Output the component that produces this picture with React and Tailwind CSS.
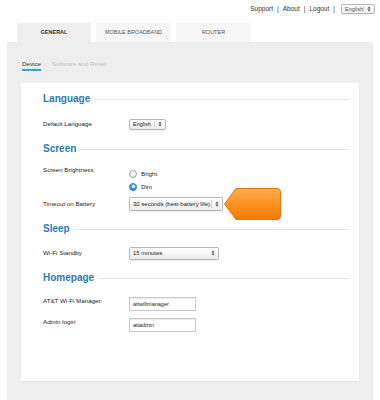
import React from "react";

function Arrows() {
  return (
    <svg width="4" height="6" viewBox="0 0 4 6" className="shrink-0">
      <path d="M0.5 2.4 L2 0.6 L3.5 2.4 Z" fill="#444" />
      <path d="M0.5 3.6 L2 5.4 L3.5 3.6 Z" fill="#444" />
    </svg>
  );
}

function Select({ w, h, text, sep, children, textCls = "text-[6px]" }) {
  return (
    <div
      className={`relative flex items-center justify-between border border-[#b8b8b8] rounded-[2px] bg-gradient-to-b from-white to-[#ebebeb] shadow-[0_1px_1px_rgba(0,0,0,0.08)] pl-[3px] pr-[3px] text-[#222] ${textCls} ${w} ${h}`}
    >
      <span className="whitespace-nowrap">{text}</span>
      <div className="flex items-center h-full">
        {sep && <div className="w-px h-[70%] bg-[#cfcfcf] mr-[3px]" />}
        <Arrows />
      </div>
      {children}
    </div>
  );
}

function Heading({ children }) {
  return (
    <div className="flex items-center h-[12px]">
      <span className="text-[10px] font-bold text-[#2a79b5] leading-none">{children}</span>
      <div className="flex-1 h-px bg-[#e6e6e6] ml-[4px]" />
    </div>
  );
}

function Label({ children }) {
  return <div className="w-[86px] shrink-0 text-[6.2px] text-[#222] leading-[8px]">{children}</div>;
}

function Input({ value }) {
  return (
    <div className="w-[67px] h-[14px] border border-[#c8c8c8] bg-white shadow-[inset_0_1px_1px_rgba(0,0,0,0.08)] flex items-center pl-[3px] text-[5.5px] text-[#222]">
      {value}
    </div>
  );
}

function Radio({ checked, label }) {
  return (
    <div className="flex items-center h-[13px]">
      {checked ? (
        <div className="w-[8px] h-[8px] rounded-full bg-gradient-to-b from-[#6fb6f0] to-[#2d86d8] border border-[#2a78c4] flex items-center justify-center">
          <div className="w-[3px] h-[3px] rounded-full bg-white" />
        </div>
      ) : (
        <div className="w-[8px] h-[8px] rounded-full border border-[#9a9a9a] bg-gradient-to-b from-white to-[#eeeeee]" />
      )}
      <span className="ml-[4px] text-[6.2px] text-[#222]">{label}</span>
    </div>
  );
}

export default function App() {
  return (
    <div className="w-[380px] h-[400px] bg-white overflow-hidden font-['Liberation_Sans',Arial,sans-serif]">
      {/* top bar */}
      <div className="h-[23px] flex justify-end items-start pt-[4px] pr-[5px] text-[6.5px] text-[#333]">
        <div className="flex items-center h-[10px]">
          <span>Support</span>
          <span className="mx-[4px]">|</span>
          <span>About</span>
          <span className="mx-[4px]">|</span>
          <span>Logout</span>
          <span className="mx-[4px]">|</span>
          <div className="ml-[2px]">
            <Select w="w-[34px]" h="h-[10px]" text="English" sep textCls="text-[5.5px] text-[#555]" />
          </div>
        </div>
      </div>
      {/* tabs */}
      <div className="flex gap-[5px] pl-[17px] h-[19px]">
        <div className="w-[74px] h-full bg-[#eeeeee] flex items-center justify-center text-[5.5px] font-bold text-[#333]">
          GENERAL
        </div>
        <div className="w-[75px] h-full bg-[#f6f6f6] flex items-center justify-center text-[5.5px] text-[#555]">
          MOBILE BROADBAND
        </div>
        <div className="w-[75px] h-full bg-[#f6f6f6] flex items-center justify-center text-[5.5px] text-[#555]">
          ROUTER
        </div>
      </div>
      {/* panel */}
      <div className="mx-[7px] h-[358px] bg-[#eeeeee] px-[14px] pt-[18px]">
        <div className="flex items-start ml-[1px] h-[23px] text-[6.2px]">
          <div className="flex flex-col">
            <span className="text-[#333] leading-[8px]">Device</span>
            <div className="h-[1.5px] bg-[#3aa6c4] mt-[1px]" />
          </div>
          <span className="ml-[11px] text-[#c4c4c4] leading-[8px]">Software and Reset</span>
        </div>
        {/* card */}
        <div className="h-[298px] bg-white pl-[22px] pr-[9px] pt-[10px] shadow-[0_1px_1px_rgba(0,0,0,0.04)]">
          <Heading>Language</Heading>
          <div className="flex items-center mt-[13px] h-[12px]">
            <Label>Default Language</Label>
            <Select w="w-[37px]" h="h-[11px]" text="English" sep textCls="text-[5.5px]" />
          </div>

          <div className="mt-[13px]">
            <Heading>Screen</Heading>
          </div>
          <div className="flex items-start mt-[11px]">
            <Label>Screen Brightness</Label>
            <div className="flex flex-col mt-[1px]">
              <Radio label="Bright" />
              <Radio checked label="Dim" />
            </div>
          </div>
          <div className="flex items-center mt-[4px] h-[14px]">
            <Label>Timeout on Battery</Label>
            <Select w="w-[94px]" h="h-[14px]" text="30 seconds (best battery life)" sep>
              <svg
                width="60"
                height="34"
                viewBox="0 0 60 34"
                className="absolute left-[calc(100%+1px)] top-[-11px]"
              >
                <defs>
                  <linearGradient id="og" x1="0" y1="0" x2="0" y2="1">
                    <stop offset="0" stopColor="#ffad4a" />
                    <stop offset="0.5" stopColor="#fb9222" />
                    <stop offset="1" stopColor="#f27a05" />
                  </linearGradient>
                </defs>
                <path
                  d="M1.5 17 L13 1.5 L54 1.5 Q57.5 1.5 57.5 5 L57.5 29 Q57.5 32.5 54 32.5 L13 32.5 Z"
                  fill="url(#og)"
                  stroke="#e2760a"
                  strokeWidth="1"
                  strokeLinejoin="round"
                />
              </svg>
            </Select>
          </div>

          <div className="mt-[12px]">
            <Heading>Sleep</Heading>
          </div>
          <div className="flex items-center mt-[11px] h-[14px]">
            <Label>Wi-Fi Standby</Label>
            <Select w="w-[90px]" h="h-[13px]" text="15 minutes" />
          </div>

          <div className="mt-[12px]">
            <Heading>Homepage</Heading>
          </div>
          <div className="flex items-start mt-[13px]">
            <Label>AT&amp;T Wi-Fi Manager:</Label>
            <Input value="attwifimanager" />
          </div>
          <div className="flex items-start mt-[7px]">
            <Label>Admin login</Label>
            <Input value="attadmin" />
          </div>
        </div>
      </div>
    </div>
  );
}
